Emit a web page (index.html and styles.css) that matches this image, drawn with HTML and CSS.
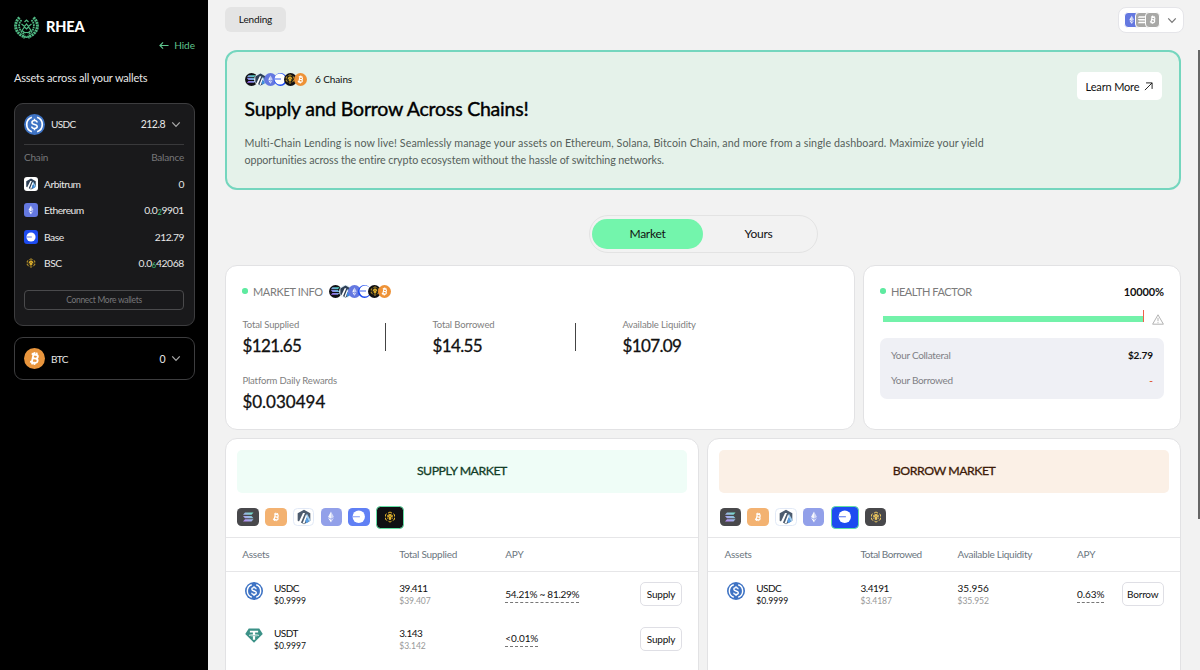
FILE: index.html
```html
<!DOCTYPE html>
<html lang="en">
<head>
<meta charset="utf-8">
<title>RHEA Lending</title>
<link rel="stylesheet" href="styles.css">
</head>
<body>
<svg class="defs" aria-hidden="true">
  <symbol id="sol" viewBox="0 0 24 24">
    <defs><linearGradient id="solg" x1="0" y1="1" x2="1" y2="0"><stop offset="0" stop-color="#a35cf0"/><stop offset=".5" stop-color="#7f9fe0"/><stop offset="1" stop-color="#3fe0b0"/></linearGradient></defs>
    <path fill="url(#solg)" d="M6 3h17l-4 4.500H2zM2 9.800h17l4 4.500H6zM6 16.500h17l-4 4.500H2z"/>
  </symbol>
  <symbol id="sol-plain" viewBox="0 0 24 24"><path fill="currentColor" d="M5 3h17l-3 4H2zM2 10h17l3 4H5zM5 17h17l-3 4H2z"/></symbol>
  <symbol id="arb" viewBox="0 0 24 24">
    <path fill="#2d3f55" d="M12 1l9.500 5.500v11L12 23l-9.500-5.500v-11z"/>
    <path fill="#8fc4ee" d="M14.500 10l2-3 5 9v1.500L19.500 19z"/>
    <path fill="#fff" d="M10.500 6h3L7 21.500l-3-1.800zM15 8.500l1.500 3.500-4 10-2.500-1z"/>
    <path fill="#3a8ee0" d="M16 12.500l3.500 6.500-4 2.500-1.500-4z"/>
  </symbol>
  <symbol id="eth" viewBox="0 0 24 24">
    <path fill="#fff" opacity=".9" d="M12 1l-6 11 6 3.500z"/><path fill="#fff" opacity=".6" d="M12 1l6 11-6 3.500z"/>
    <path fill="#fff" d="M6 13.700L12 23v-5.700z"/><path fill="#fff" opacity=".65" d="M18 13.700L12 23v-5.700z"/>
  </symbol>
  <symbol id="base" viewBox="0 0 24 24"><circle cx="12" cy="12" r="11" fill="#fff"/><path fill="#4f70ee" d="M1 10.900h13v2.200H1z"/></symbol>
  <symbol id="bnb" viewBox="0 0 24 24">
    <g fill="none" stroke="#e5b52c" stroke-width="2"><path d="M8 4.300L12 2l4 2.300M3 11V7.200l2.500-1.500M21 11V7.200l-2.500-1.500M3 13.500v3.300l3.500 2M21 13.500v3.300l-3.500 2M9 20.500l3 1.700 3-1.700"/></g>
    <path fill="#e5b52c" d="M12 5.500l5.500 3.200v2.600l-3.300 1.900v3.900L12 18.400l-2.200-1.300v-3.900l-3.300-1.900V8.700zM6.500 12.700l2 1.200v2.500l-2-1.200zM17.500 12.700l-2 1.200v2.500l2-1.200z"/>
    <path stroke="#17171a" stroke-width=".8" fill="none" d="M8.500 9.200l3.500 2 3.500-2"/>
  </symbol>
  <symbol id="btc" viewBox="0 0 24 24">
    <g transform="rotate(12 12 12)" fill="none" stroke="currentColor" stroke-width="3"><path d="M6 5.500h7.500a3.100 3.100 0 0 1 0 6.300H9M13.500 11.800h.8a3.300 3.300 0 0 1 0 6.700H6M9 5.500v13M10 2v3.500M13.800 2v3.500M10 18.500V22M13.800 18.500V22"/></g>
  </symbol>
  <symbol id="usdc" viewBox="0 0 24 24">
    <circle cx="12" cy="12" r="12" fill="#3e73c4"/>
    <g fill="none" stroke="#fff"><path stroke-width="1.900" d="M9 3.700a8.800 8.800 0 0 0 0 16.600M15 3.700a8.800 8.800 0 0 1 0 16.600"/><path stroke-width="1.800" d="M15 9.700c-.2-1.500-1.300-2.200-3-2.200s-2.900.8-2.900 2.200c0 3.200 6 1.400 6 4.700 0 1.400-1.300 2.200-3.100 2.200s-3-.8-3.200-2.300M12 5.500v2M12 16.500v2"/></g>
  </symbol>
  <symbol id="usdt" viewBox="0 0 24 20">
    <path fill="#3b9187" d="M5 .5h14l4.700 7.500L12 19.500.3 8z"/>
    <path fill="#fff" d="M6.500 3.500h11v2.600h-4v2c3 .2 5 .8 5 1.500s-2 1.300-5 1.500v4.400h-3v-4.400c-3-.2-5-.8-5-1.500s2-1.300 5-1.500v-2h-4z"/>
    <path fill="none" stroke="#3b9187" stroke-width=".7" d="M10.500 8.800c-5 .3-5 1.200 0 1.400h3c5-.2 5-1.100 0-1.400"/>
  </symbol>
  <symbol id="chev" viewBox="0 0 12 8"><path fill="none" stroke="currentColor" stroke-width="1.500" d="M1.500 1.500L6 6.200l4.500-4.700"/></symbol>
</svg>

<aside class="sidebar">
  <div class="brand">
    <svg class="brand-mark" viewBox="0 0 25 23" fill="none" stroke="#4fb883">
      <path stroke-width="3" stroke-dasharray="2 .7" d="M5.500 1.500C-.5 7-.2 17 11 21M19.500 1.500C25.500 7 25.200 17 14 21"/>
      <path stroke-width="1.800" stroke-dasharray="1.700 .7" d="M7.500 4C3.500 8.500 4.500 15 11 18.300M17.500 4C21.500 8.500 20.500 15 14 18.300"/>
      <path stroke-width="1.200" d="M8 14.500l2.500-3.500 2 2 2-2 2.500 3.500-2.500 2h-4zM7.500 8l3 2.500 2-2.500 2 2.500 3-2.500M10.500 6l2-2 2 2M9 22l7-2M16 22l-7-2"/>
    </svg>
    <span class="brand-name">RHEA</span>
  </div>
  <div class="hide"><svg viewBox="0 0 11 9" fill="none" stroke="currentColor" stroke-width="1.200"><path d="M10.500 4.500H1M4.500 1L1 4.500 4.500 8"/></svg><span>Hide</span></div>
  <div class="side-title">Assets across all your wallets</div>

  <section class="wallet">
    <div class="token"><svg class="coin"><use href="#usdc"/></svg><span class="token-name">USDC</span><span class="amount">212.8</span><svg class="chev"><use href="#chev"/></svg></div>
    <div class="chain-head"><span>Chain</span><span>Balance</span></div>
    <div class="chain-row"><i class="sq white"><svg><use href="#arb"/></svg></i><span>Arbitrum</span><b>0</b></div>
    <div class="chain-row"><i class="sq violet"><svg><use href="#eth"/></svg></i><span>Ethereum</span><b class="long">0.0<sub>2</sub>9901</b></div>
    <div class="chain-row"><i class="sq blue"><svg><use href="#base"/></svg></i><span>Base</span><b>212.79</b></div>
    <div class="chain-row"><i class="sq"><svg><use href="#bnb"/></svg></i><span>BSC</span><b class="long">0.0<sub>6</sub>42068</b></div>
    <div class="connect">Connect More wallets</div>
  </section>
  <section class="wallet closed">
    <div class="token"><i class="coin btc-coin"><svg><use href="#btc"/></svg></i><span class="token-name">BTC</span><span class="amount">0</span><svg class="chev"><use href="#chev"/></svg></div>
  </section>
</aside>

<main class="main">
  <header class="top">
    <div class="crumb">Lending</div>
    <div class="accounts">
      <i class="acc violet"><svg><use href="#eth"/></svg></i><i class="acc"><svg><use href="#sol-plain"/></svg></i><i class="acc"><svg><use href="#btc"/></svg></i>
      <svg class="chev"><use href="#chev"/></svg>
    </div>
  </header>

  <section class="banner">
    <div class="banner-copy">
      <div class="chains-line">
        <div class="stack"><i class="black"><svg><use href="#sol"/></svg></i><i class="pale"><svg><use href="#arb"/></svg></i><i class="violet"><svg><use href="#eth"/></svg></i><i class="blue big"><svg><use href="#base"/></svg></i><i class="black"><svg><use href="#bnb"/></svg></i><i class="orange"><svg><use href="#btc"/></svg></i></div>
        <span>6 Chains</span>
      </div>
      <h1>Supply and Borrow Across Chains!</h1>
      <p><span class="line1">Multi-Chain Lending is now live! Seamlessly manage your assets on Ethereum, Solana, Bitcoin Chain, and more from a single dashboard. Maximize your yield</span><br><span class="line2">opportunities across the entire crypto ecosystem without the hassle of switching networks.</span></p>
    </div>
    <div class="learn"><span>Learn More</span><svg viewBox="0 0 10 10" fill="none" stroke="#111" stroke-width="1"><path d="M1 9l8-8M2.300 1H9v6.700"/></svg></div>
  </section>

  <nav class="tabs"><span class="tab on">Market</span><span class="tab">Yours</span></nav>

  <div class="row">
    <section class="card info">
      <div class="label"><i class="dot"></i><span class="caps">MARKET INFO</span>
        <div class="stack"><i class="black"><svg><use href="#sol"/></svg></i><i class="pale"><svg><use href="#arb"/></svg></i><i class="violet"><svg><use href="#eth"/></svg></i><i class="blue big"><svg><use href="#base"/></svg></i><i class="black"><svg><use href="#bnb"/></svg></i><i class="orange"><svg><use href="#btc"/></svg></i></div>
      </div>
      <div class="stats">
        <div class="stat ruled"><small>Total Supplied</small><strong>$121.65</strong></div>
        <div class="stat ruled"><small>Total Borrowed</small><strong>$14.55</strong></div>
        <div class="stat"><small>Available Liquidity</small><strong>$107.09</strong></div>
        <div class="stat rewards"><small>Platform Daily Rewards</small><strong>$0.030494</strong></div>
      </div>
    </section>
    <section class="card health">
      <div class="label"><i class="dot"></i><span class="caps hf">HEALTH FACTOR</span><span class="pct">10000%</span></div>
      <div class="meter"><div class="bar"></div><svg viewBox="0 0 12 11" fill="none" stroke="#aaa" stroke-width=".9"><path stroke-linejoin="round" d="M6 .8L11.400 10.200H.6zM6 3.800v3.400M6 8.200v1"/></svg></div>
      <div class="sums">
        <div><span>Your Collateral</span><b>$2.79</b></div>
        <div><span>Your Borrowed</span><b class="neg">-</b></div>
      </div>
    </section>
  </div>

  <div class="row markets">
    <section class="card market">
      <h2 class="supply-title">SUPPLY MARKET</h2>
      <div class="picker">
        <i class="black"><svg><use href="#sol"/></svg></i><i class="orange"><svg><use href="#btc"/></svg></i><i class="white"><svg class="large"><use href="#arb"/></svg></i><i class="violet"><svg><use href="#eth"/></svg></i><i class="blue"><svg class="large"><use href="#base"/></svg></i><i class="black on"><svg><use href="#bnb"/></svg></i>
      </div>
      <div class="thead supply-grid"><span>Assets</span><span>Total Supplied</span><span>APY</span></div>
      <div class="trow supply-grid">
        <div class="asset"><svg><use href="#usdc"/></svg><div class="pair">USDC<small>$0.9999</small></div></div>
        <div class="pair muted">39.411<small>$39.407</small></div>
        <div><span class="apy apy-range">54.21% ~ 81.29%</span></div>
        <div class="btn">Supply</div>
      </div>
      <div class="trow supply-grid">
        <div class="asset"><svg class="tether"><use href="#usdt"/></svg><div class="pair">USDT<small>$0.9997</small></div></div>
        <div class="pair muted">3.143<small>$3.142</small></div>
        <div><span class="apy">&lt;0.01%</span></div>
        <div class="btn">Supply</div>
      </div>
    </section>
    <section class="card market">
      <h2 class="borrow-title">BORROW MARKET</h2>
      <div class="picker">
        <i class="black"><svg><use href="#sol"/></svg></i><i class="orange"><svg><use href="#btc"/></svg></i><i class="white"><svg class="large"><use href="#arb"/></svg></i><i class="violet"><svg><use href="#eth"/></svg></i><i class="blue on"><svg class="large"><use href="#base"/></svg></i><i class="black"><svg><use href="#bnb"/></svg></i>
      </div>
      <div class="thead borrow-grid"><span>Assets</span><span class="tight">Total Borrowed</span><span>Available Liquidity</span><span>APY</span></div>
      <div class="trow borrow-grid">
        <div class="asset"><svg><use href="#usdc"/></svg><div class="pair">USDC<small>$0.9999</small></div></div>
        <div class="pair muted">3.4191<small>$3.4187</small></div>
        <div class="pair muted wide">35.956<small>$35.952</small></div>
        <div><span class="apy">0.63%</span></div>
        <div class="btn">Borrow</div>
      </div>
    </section>
  </div>
</main>
<div class="scroll-thumb"></div>
</body>
</html>
```

FILE: styles.css
```css
* { box-sizing: border-box; }
body { margin: 0; display: flex; width: 1200px; height: 670px; overflow: hidden; background: #f2f2f2; font-family: Lato, "Liberation Sans", sans-serif; font-size: 10.5px; color: #111; white-space: nowrap; }
i { font-style: normal; }
.defs { position: absolute; width: 0; height: 0; }
svg { display: block; flex: none; }

.black { background: #101014; }
.white { background: #fff; }
.pale { background: #dcebf2; }
.violet { background: #6478e0; color: #fff; }
.blue { background: #1d4bf0; }
.orange { background: #ee9236; color: #fff; }

/* Sidebar */
.sidebar { width: 208px; flex: none; background: #000; color: #e8e8e8; padding: 15px 13px 0 14px; }
.brand { display: flex; align-items: center; gap: 7px; height: 24px; }
.brand-mark { width: 25px; height: 23px; }
.brand-name { font-size: 14.500px; font-weight: 900; color: #fff; line-height: 24px; letter-spacing: -.15px; }
.hide { display: flex; align-items: center; justify-content: flex-end; gap: 5px; height: 14px; color: #5fc58e; line-height: 14px; font-size: 10px; margin-top: -1px; }
.hide svg { width: 10px; height: 9px; }
.side-title { margin-top: 18px; line-height: 16px; font-size: 11px; letter-spacing: -.17px; }
.wallet { margin-top: 17px; border: 1px solid #3d3d3f; border-radius: 9px; background: #19191b; padding: 0 10px 0 9px; height: 223px; }
.closed { margin-top: 11px; height: 43px; background: #000; }
.token { display: flex; align-items: center; height: 41px; border-bottom: 1px solid #39393b; }
.closed .token { border: 0; }
.coin { width: 21px; height: 21px; }
.btc-coin { border-radius: 50%; background: #e8953d; color: #fff; display: grid; place-items: center; }
.btc-coin svg { width: 15px; height: 15px; }
.token-name { margin-left: 6px; font-size: 10px; letter-spacing: -.6px; }
.amount { margin-left: auto; letter-spacing: -.5px; }
.token .chev { width: 10px; height: 7px; margin: 0 3px 0 6px; color: #aaa; }
.chain-head { display: flex; justify-content: space-between; line-height: 14px; color: #77777a; font-size: 10px; letter-spacing: -.2px; padding: 5px 0 6.700px; }
.chain-row { display: flex; align-items: center; height: 26.400px; font-size: 10.300px; letter-spacing: -.5px; }
.chain-row b { margin-left: auto; font-weight: 400; }
.chain-row .long { letter-spacing: -.35px; }
.chain-row sub { font-size: 7.500px; color: #42c882; vertical-align: -.5px; line-height: 0; }
.sq { width: 14px; height: 14px; border-radius: 3px; display: grid; place-items: center; margin-right: 6px; }
.sq svg { width: 10px; height: 10px; }
.sq.white svg { width: 12px; height: 12px; }
.connect { margin-top: 13.300px; height: 20px; border: 1px solid #4a4a4c; border-radius: 4px; color: #77777a; font-size: 8.500px; letter-spacing: -.3px; line-height: 18px; text-align: center; }

/* Top bar and banner */
.main { width: 956px; margin-left: 17px; flex: none; }
.top { height: 50px; padding-top: 7px; display: flex; justify-content: space-between; align-items: flex-start; }
.crumb { width: 61px; height: 25px; line-height: 25px; border-radius: 6px; background: #e4e4e4; text-align: center; font-size: 10px; letter-spacing: -.15px; }
.accounts { width: 66px; height: 26px; margin-right: -3px; border: 1px solid #e5e5e9; border-radius: 8px; background: #fff; display: flex; align-items: center; padding-left: 5px; }
.acc { width: 15px; height: 16px; border-radius: 4px; border: 1px solid #fff; background: #a8a8a6; color: #fff; display: grid; place-items: center; margin-right: -4.500px; }
.acc.violet { background: #6478e0; }
.acc svg { width: 9.500px; height: 9.500px; }
.accounts .chev { width: 10px; height: 7px; margin-left: 11px; color: #777; }
.banner { height: 140px; border: 2px solid #74d6be; border-radius: 12px; background: #e5f2ea; display: flex; justify-content: space-between; padding: 20px 17px 0 17.500px; }
.chains-line { display: flex; align-items: center; gap: 8px; height: 14px; font-size: 10px; letter-spacing: -.1px; }
.stack { display: flex; width: 62.500px; }
.stack i { flex: none; width: 13px; height: 13px; border-radius: 50%; margin-right: -3.200px; display: grid; place-items: center; }
.stack svg { width: 9px; height: 9px; }
.stack .black svg { width: 10px; height: 10px; }
.stack .pale svg { width: 13px; height: 13px; }
.stack .big svg { width: 12px; height: 12px; }
.banner h1 { margin: 10px 0 0; font-size: 19.500px; line-height: 25px; font-weight: 400; letter-spacing: -.22px; -webkit-text-stroke: .4px #000; color: #000; }
.banner p { margin: 13px 0 0; font-size: 10.700px; line-height: 17px; color: #555f5a; }
.line1 { letter-spacing: .09px; }
.line2 { letter-spacing: -.07px; }
.learn { width: 85px; height: 28px; border-radius: 5px; background: #fff; display: flex; align-items: center; justify-content: center; gap: 5px; font-size: 11px; letter-spacing: -.15px; }
.learn svg { width: 9px; height: 9px; }

.tabs { width: 229px; height: 38px; margin: 25px 0 0 364px; border: 1px solid #e3e3e3; border-radius: 19px; display: flex; padding: 3px 2px; }
.tab { width: 111px; height: 30px; border-radius: 15px; line-height: 30px; text-align: center; font-size: 12px; letter-spacing: -.25px; }
.tab.on { background: #73f5ac; }

/* Cards */
.row { display: flex; gap: 8px; margin-top: 12px; }
.card { background: #fff; border: 1px solid #e2e2e4; border-radius: 12px; }
.info { width: 630px; height: 165px; padding: 17.500px 0 0 16px; }
.health { flex: 1; height: 165px; padding: 17.500px 16px 0; }
.label { display: flex; align-items: center; height: 15px; color: #7b7b7b; font-size: 11px; }
.caps { letter-spacing: -.35px; }
.hf { letter-spacing: -.45px; }
.dot { width: 5.500px; height: 5.500px; border-radius: 50%; background: #5eeaa0; margin-right: 5.500px; }
.label .stack { margin-left: 6px; }
.pct { margin-left: auto; color: #111; font-weight: 700; letter-spacing: -.1px; }
.stats { display: grid; grid-template-columns: 190px 190px 190px; margin: 19px 0 0 .4px; }
.stat { height: 56px; position: relative; }
.stat small { display: block; font-size: 9.500px; line-height: 14px; color: #808080; letter-spacing: -.12px; }
.stat strong { display: block; font-size: 17px; line-height: 27px; font-weight: 400; letter-spacing: -.6px; -webkit-text-stroke: .3px #111; }
.rewards strong { letter-spacing: 0; }
.ruled::after { content: ""; position: absolute; left: 142.600px; top: 5px; width: 1px; height: 28px; background: #444; }
.meter { display: flex; justify-content: space-between; height: 12px; align-items: center; margin: 14.500px 0 0 3px; }
.bar { width: 261px; height: 6px; background: #73f2aa; position: relative; }
.bar::after { content: ""; position: absolute; right: 0; top: -6px; width: 1px; height: 12px; background: #f0604a; }
.meter svg { width: 12px; height: 11px; }
.sums { margin-top: 13px; height: 61px; border-radius: 7px; background: #eff0f5; padding: 5px 11px; color: #808085; font-size: 10px; letter-spacing: -.3px; }
.sums div { display: flex; justify-content: space-between; line-height: 25px; }
.sums b { color: #111; letter-spacing: -.1px; }
.sums .neg { color: #e0603a; }

/* Market tables */
.markets { margin-top: 8px; gap: 8.500px; }
.market { flex: 1; height: 260px; }
.market h2 { margin: 11px 11px 0; height: 43px; line-height: 42px; border-radius: 5px; text-align: center; font-size: 12.300px; font-weight: 400; letter-spacing: -.46px; }
.supply-title { background: #effdf7; color: #123d27; -webkit-text-stroke: .3px #123d27; }
.borrow-title { background: #fbf0e6; color: #3d1b08; -webkit-text-stroke: .3px #3d1b08; }
.picker { height: 44px; padding: 4px 11.300px 0; display: flex; align-items: center; gap: 6.200px; }
.picker i { width: 21.600px; height: 17.500px; border-radius: 4.500px; display: grid; place-items: center; opacity: .7; }
.picker i.black { opacity: .76; }
.picker i.white { border: 1px solid #dde6f5; opacity: .85; }
.picker i.on { width: 28px; height: 23px; opacity: 1; border: 1.500px solid #62dfa4; }
.picker svg { width: 12px; height: 12px; }
.picker .orange svg { width: 10px; height: 10px; }
.picker .large { width: 13.500px; height: 13.500px; }
.picker .white .large { width: 16px; height: 16px; }
.supply-grid { display: grid; grid-template-columns: 157px 106px 134.700px 42px; padding-left: 16.300px; }
.borrow-grid { display: grid; grid-template-columns: 136px 97px 119.500px 44.700px 42px; padding-left: 16.300px; }
.thead { height: 35px; line-height: 33px; border-top: 1px solid #e6e6e8; border-bottom: 1px solid #e6e6e8; color: #6b7680; font-size: 10px; letter-spacing: -.27px; }
.tight { letter-spacing: -.42px; }
.trow { height: 44.500px; align-items: center; }
.asset { display: flex; align-items: center; padding-left: 2.700px; }
.asset svg { width: 18px; height: 18px; margin: -7px 11px 0 0; }
.asset svg.tether { height: 15px; }
.pair { font-size: 10px; line-height: 12px; letter-spacing: -.5px; padding-top: 1px; }
.pair.wide { letter-spacing: 0; }
.pair small { display: block; font-size: 8.600px; line-height: 13px; letter-spacing: 0; position: relative; top: 1px; }
.muted small { color: #999; letter-spacing: -.1px; }
.apy { display: inline-block; height: 17px; line-height: 16px; border-bottom: 1px dashed #777; font-size: 10px; letter-spacing: -.1px; }
.apy-range { letter-spacing: -.27px; }
.btn { height: 24px; border: 1px solid #dfdfe5; border-radius: 5px; line-height: 22px; text-align: center; font-size: 10px; letter-spacing: -.2px; }

.scroll-thumb { position: absolute; right: 0; top: 50px; width: 2px; height: 469px; background: #666; }
```
